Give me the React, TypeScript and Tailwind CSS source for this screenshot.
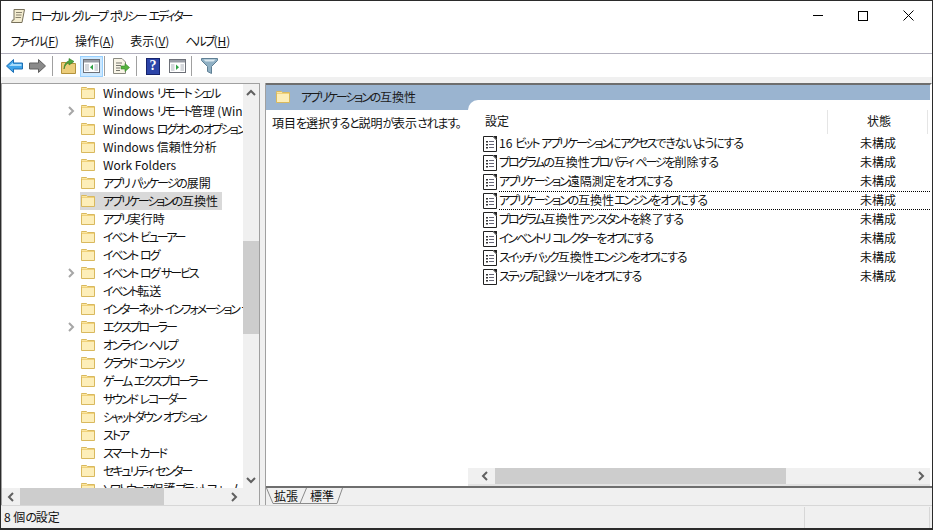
import React from 'react';

const treeItems = [
    { name: 'Windows リモート シェル' },
    { name: 'Windows リモート管理 (WinRM)', arrow: true },
    { name: 'Windows ログオンのオプション' },
    { name: 'Windows 信頼性分析' },
    { name: 'Work Folders' },
    { name: 'アプリ パッケージの展開' },
    { name: 'アプリケーションの互換性', selected: true },
    { name: 'アプリ実行時' },
    { name: 'イベント ビューアー' },
    { name: 'イベント ログ' },
    { name: 'イベント ログ サービス', arrow: true },
    { name: 'イベント転送' },
    { name: 'インターネット インフォメーション サービス' },
    { name: 'エクスプローラー', arrow: true },
    { name: 'オンライン ヘルプ' },
    { name: 'クラウド コンテンツ' },
    { name: 'ゲーム エクスプローラー' },
    { name: 'サウンド レコーダー' },
    { name: 'シャットダウン オプション' },
    { name: 'ストア' },
    { name: 'スマート カード' },
    { name: 'セキュリティ センター' },
    { name: 'ソフトウェア保護プラットフォーム' },
];

const settings = [
    '16 ビット アプリケーションにアクセスできないようにする',
    'プログラムの互換性プロパティ ページを削除する',
    'アプリケーション遠隔測定をオフにする',
    'アプリケーションの互換性エンジンをオフにする',
    'プログラム互換性アシスタントを終了する',
    'インベントリ コレクターをオフにする',
    'スイッチバック互換性エンジンをオフにする',
    'ステップ記録ツールをオフにする',
];

// The kana in the screenshot's UI font are much narrower than the kanji, so tighten only those runs
const Jp = ({ text }: { text: string }) => (
    <>
        {text.split(/([\u30a0-\u30ff]+|[\u3040-\u309f\u3002]+)/).filter(Boolean).map((run, i) => {
            if (/^[\u30a0-\u30ff]/.test(run)) return <span key={i} className="tracking-[-2.1px]">{run}</span>;
            if (/^[\u3040-\u309f\u3002]/.test(run)) return <span key={i} className="tracking-[-1.2px]">{run}</span>;
            return <span key={i}>{run}</span>;
        })}
    </>
);

const FolderIcon = () => (
    <svg width="16" height="14" viewBox="0 0 16 14" className="shrink-0">
        <path d="M1.5 2.5 V1.5 H6.5 L7.5 2.5 H14.5 V12.5 H1.5 Z" fill="#fbe6a2" stroke="#d9b95e" />
        <rect x="2" y="3" width="12" height="1" fill="#f1d27a" />
        <rect x="2" y="4" width="12" height="8" fill="#fdeeb9" />
    </svg>
);

const PolicyIcon = () => (
    <svg width="16" height="16" viewBox="0 0 16 16" className="shrink-0">
        <path d="M1.5 .5 H11 L14.5 4 V15.5 H1.5 Z" fill="#fff" stroke="#222" />
        <path d="M11 0 H15 V4 Z" fill="#222" />
        <rect x="4" y="5" width="2" height="1.5" fill="#333" />
        <rect x="4" y="8" width="2" height="1.5" fill="#333" />
        <rect x="4" y="11" width="2" height="1.5" fill="#333" />
        <rect x="7" y="5" width="5" height="1" fill="#667" />
        <rect x="7" y="8" width="5" height="1" fill="#667" />
        <rect x="7" y="11" width="5" height="1" fill="#667" />
    </svg>
);

const Chevron = ({ dir, color = '#606060' }: { dir: 'up' | 'down' | 'left' | 'right'; color?: string }) => {
    const d = {
        up: 'M1 6 L5 2 L9 6',
        down: 'M1 2 L5 6 L9 2',
        left: 'M6 1 L2 5 L6 9',
        right: 'M2 1 L6 5 L2 9',
    }[dir];
    const w = dir === 'up' || dir === 'down' ? 10 : 8;
    const h = dir === 'up' || dir === 'down' ? 8 : 10;
    return (
        <svg width={w} height={h} viewBox={`0 0 ${w} ${h}`} className="shrink-0">
            <path d={d} fill="none" stroke={color} strokeWidth="2" />
        </svg>
    );
};

const Separator = () => <div className="w-px h-[20px] bg-[#a0a0a0]" />;

const Toolbar = () => (
    <div className="h-[22px] shrink-0 flex items-center pl-[5px] mt-[1px]">
        {/* back */}
        <svg width="17" height="14" viewBox="0 0 17 14">
            <path d="M.5 7 L7.5 .5 V4 H16.5 V10 H7.5 V13.5 Z" fill="#3fa4ea" stroke="#1d6fb4" />
            <path d="M3 7 L7 3.5 V5 H15.5 V7 Z" fill="#a8dcfb" />
        </svg>
        {/* forward */}
        <svg width="17" height="14" viewBox="0 0 17 14" className="ml-[6px]">
            <path d="M16.5 7 L9.5 .5 V4 H.5 V10 H9.5 V13.5 Z" fill="#8a8a8a" stroke="#5f5f5f" />
        </svg>
        <div className="ml-[6px]"><Separator /></div>
        {/* up folder */}
        <svg width="15" height="16" viewBox="0 0 15 16" className="ml-[8px]">
            <path d="M.5 4.5 H5 L6 5.5 H14.5 V15.5 H.5 Z" fill="#eccd7b" stroke="#b3923d" />
            <path d="M3 11 C4 7 6 5 8 4.5 V7 L13 3.5 L8 .5 V3 C5 3.5 3 7 3 11 Z" fill="#4fa83d" stroke="#2f7a24" strokeWidth=".6" />
        </svg>
        {/* show/hide tree, pressed */}
        <div className="ml-[4px] w-[23px] h-[21px] bg-[#cce8ff] border border-[#99d1ff] flex items-center justify-center">
            <svg width="17" height="14" viewBox="0 0 17 14">
                <rect x=".5" y=".5" width="16" height="13" fill="#fff" stroke="#6d7078" />
                <rect x="1" y="1" width="15" height="2.5" fill="#9a9ea6" />
                <rect x="2" y="5" width="4" height="7" fill="#d5d8dc" />
                <path d="M10 5.5 V11 L7 8.2 Z" fill="#2fa043" />
                <rect x="11.5" y="5" width="3.5" height="7" fill="#d5d8dc" />
            </svg>
        </div>
        <div className="ml-[1px]"><Separator /></div>
        {/* export list */}
        <svg width="17" height="16" viewBox="0 0 17 16" className="ml-[8px]">
            <path d="M.5 .5 H9 L12.5 4 V15.5 H.5 Z" fill="#f8f4e6" stroke="#8a8a80" />
            <path d="M3 5 H9 M3 7.5 H8 M3 10 H7 M3 12.5 H7" stroke="#77776f" />
            <path d="M8 8 H12 V5.5 L16.5 9.5 L12 13.5 V11 H8 Z" fill="#55b33e" stroke="#35862a" strokeWidth=".6" />
        </svg>
        <div className="ml-[6px]"><Separator /></div>
        {/* help */}
        <div className="ml-[9px] w-[14px] h-[17px] bg-[#2c44a8] border border-[#16236c] flex items-center justify-center text-white text-[14px] font-bold leading-none font-['Liberation_Serif',serif]">?</div>
        {/* action pane */}
        <svg width="17" height="14" viewBox="0 0 17 14" className="ml-[9px]">
            <rect x=".5" y=".5" width="16" height="13" fill="#fff" stroke="#6d7078" />
            <rect x="1" y="1" width="15" height="2.5" fill="#9a9ea6" />
            <rect x="2" y="5" width="3.5" height="7" fill="#d5d8dc" />
            <path d="M7 5.5 V11 L10 8.2 Z" fill="#2fa043" />
            <rect x="11.5" y="5" width="3.5" height="7" fill="#d5d8dc" />
        </svg>
        <div className="ml-[5px]"><Separator /></div>
        {/* filter */}
        <svg width="17" height="16" viewBox="0 0 17 16" className="ml-[9px]">
            <path d="M.5 .5 H16.5 V2.5 L10.5 8.5 V15.5 L6.5 13.5 V8.5 L.5 2.5 Z" fill="#8fb0c4" stroke="#5f7f94" />
            <path d="M2.5 1.5 H14.5 L12.5 3.5 H4.5 Z" fill="#dbe8ef" />
        </svg>
    </div>
);

const TreePane = () => (
    <div className="w-[259px] shrink-0 flex flex-col bg-white border-t border-l border-r border-[#a0a0a0]">
        <div className="flex-1 min-h-0 flex">
            <div className="flex-1 min-w-0 overflow-hidden">
                {treeItems.map(item => (
                    <div key={item.name} className="h-[18px] flex items-center pl-[65px] whitespace-nowrap">
                        <div className="w-[13px] shrink-0">{item.arrow && <Chevron dir="right" color="#a6a6a6" />}</div>
                        <div className={`h-[18px] flex items-center pr-[4px] ${item.selected ? 'bg-[#d9d9d9]' : ''}`}>
                            <FolderIcon />
                            <span className="pl-[7px] leading-[18px]"><Jp text={item.name} /></span>
                        </div>
                    </div>
                ))}
            </div>
            <div className="w-[16px] shrink-0 bg-[#f0f0f0] flex flex-col items-center">
                <div className="h-[17px] flex items-center"><Chevron dir="up" /></div>
                <div className="w-full h-[93px] bg-[#cdcdcd] mt-[140px]" />
                <div className="mt-auto h-[17px] flex items-center"><Chevron dir="down" /></div>
            </div>
        </div>
        <div className="h-[17px] shrink-0 bg-[#f0f0f0] flex items-center">
            <div className="w-[18px] flex justify-center"><Chevron dir="left" /></div>
            <div className="w-[144px] h-full bg-[#cdcdcd]" />
            <div className="ml-[66px]"><Chevron dir="right" /></div>
        </div>
    </div>
);

const DetailPane = () => (
    <div className="flex-1 min-w-0 flex flex-col border-l border-[#a0a0a0] ml-[5px]">
        <div className="flex-1 min-h-0 flex bg-[#9ab4d0] border-t-2 border-[#6e6e6e] border-r-2 border-r-white">
            <div className="w-[202px] shrink-0 flex flex-col">
                <div className="h-[25px] shrink-0 flex items-center pl-[9px] pb-[1px]">
                    <FolderIcon />
                    <span className="ml-[10px] text-[#1a1a1a]"><Jp text="アプリケーションの互換性" /></span>
                </div>
                <div className="flex-1 bg-white pl-[6px] pt-[4px] leading-[18px] whitespace-nowrap overflow-hidden"><Jp text="項目を選択すると説明が表示されます。" /></div>
            </div>
            <div className="flex-1 min-w-0 flex flex-col mt-[15px] bg-white rounded-tl-[10px] border-b-2 border-[#e3e3e3]">
                <div className="h-[24px] mt-[10px] flex shrink-0">
                    <div className="flex-1 pl-[17px] leading-[22px]">設定</div>
                    <div className="w-[101px] border-x border-[#e5e5e5] pl-[39px] leading-[22px]">状態</div>
                    <div className="w-[2px]" />
                </div>
                <div className="flex-1 min-h-0">
                    {settings.map((s, i) => (
                        <div key={s} className="h-[19px] flex items-center pl-[14px] whitespace-nowrap">
                            <PolicyIcon />
                            <div className={`ml-[1px] h-[19px] flex-1 min-w-0 flex leading-[15px] ${i === 3 ? 'border-y border-dotted border-black' : 'py-px'}`}>
                                <span className="flex-1 min-w-0"><Jp text={s} /></span>
                                <span className="w-[70px] shrink-0">未構成</span>
                            </div>
                        </div>
                    ))}
                </div>
                <div className="h-[16px] shrink-0 bg-[#f0f0f0] flex items-center">
                    <div className="w-[27px] pl-[13px]"><Chevron dir="left" /></div>
                    <div className="w-[291px] h-full bg-[#cdcdcd]" />
                    <div className="ml-auto mr-[5px]"><Chevron dir="right" /></div>
                </div>
            </div>
        </div>
        {/* 拡張 / 標準 tabs */}
        <div className="relative h-[19px] shrink-0 bg-[#f0f0f0] border-t-2 border-[#6e6e6e] flex items-start pt-[1px]">
            <svg className="absolute left-0 top-0" width="80" height="17" viewBox="0 0 80 17">
                <path d="M.5 0 L7 15.5 H34 L40.5 0 M34 15.5 L37 15.5 H71 L76.5 0" fill="none" stroke="#8a8a8a" />
            </svg>
            <span className="ml-[8px] w-[36px] leading-[14px]">拡張</span>
            <span className="leading-[14px]">標準</span>
        </div>
    </div>
);

const App = () => {
    return (
        <div className="w-[933px] h-[530px] overflow-hidden flex flex-col bg-white border border-[#2b2b2b] border-b-2 text-[12px] text-[#111] font-['Noto_Sans_CJK_JP','Noto_Sans',sans-serif] [font-feature-settings:'palt']">
            {/* title bar */}
            <div className="h-[29px] shrink-0 flex items-center">
                <svg width="16" height="16" viewBox="0 0 16 16" className="ml-[9px]">
                    <path d="M4 1.5 H14.5 L12 14.5 H1.5 L2.5 12 H4 Z" fill="#f3ecd0" stroke="#77705a" />
                    <path d="M6 4.5 H12 M6 7 H11.5 M5.5 9.5 H11" stroke="#8a8470" />
                </svg>
                <span className="ml-[5px]"><Jp text="ローカル グループ ポリシー エディター" /></span>
                <div className="ml-auto flex items-center">
                    <div className="w-[10px] h-px bg-black mr-[35px]" />
                    <div className="w-[10px] h-[10px] border border-black mr-[35px]" />
                    <svg width="11" height="11" viewBox="0 0 11 11" className="mr-[18px]">
                        <path d="M.5 .5 L10.5 10.5 M10.5 .5 L.5 10.5" stroke="#000" />
                    </svg>
                </div>
            </div>
            {/* menu */}
            <div className="h-[24px] shrink-0 flex items-center gap-[16px] pl-[10px] pb-[2px] border-b border-[#b2b0bd]">
                <span><Jp text="ファイル" />(<u>F</u>)</span>
                <span>操作(<u>A</u>)</span>
                <span>表示(<u>V</u>)</span>
                <span><Jp text="ヘルプ" />(<u>H</u>)</span>
            </div>
            <Toolbar />
            <div className="flex-1 min-h-0 flex flex-col bg-[#f0f0f0] pt-[6px]">
                <div className="flex-1 min-h-0 flex">
                    <TreePane />
                    <DetailPane />
                </div>
                {/* status bar */}
                <div className="h-[23px] shrink-0 border-t border-[#d7d7d7] flex items-center pl-[3px]">
                    <span className="flex-1"><Jp text="8 個の設定" /></span>
                    <div className="w-px h-[21px] bg-[#d7d7d7] mr-[124px]" />
                    <div className="w-px h-[21px] bg-[#d7d7d7] mr-[2px]" />
                </div>
            </div>
        </div>
    );
};

export default App;
